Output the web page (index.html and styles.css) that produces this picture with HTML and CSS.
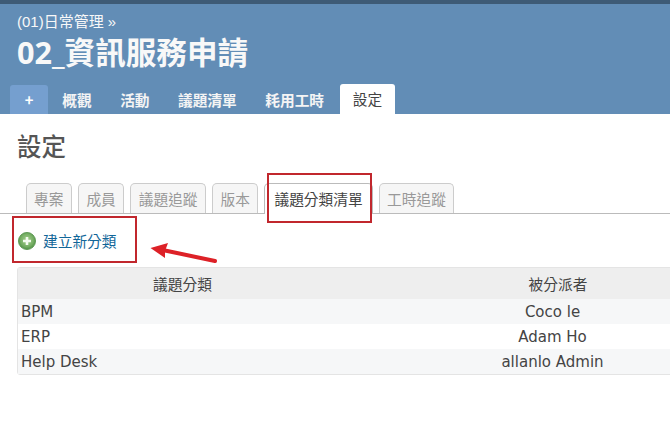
FILE: index.html
```html
<!DOCTYPE html>
<html lang="zh-Hant">
<head>
<meta charset="utf-8">
<title>設定</title>
<link rel="stylesheet" href="styles.css">
</head>
<body>
<header class="header">
  <div class="crumb">(01)日常管理 »</div>
  <h1 class="title">02_資訊服務申請</h1>
  <nav class="main-menu">
    <a class="new-item">+</a>
    <a class="menu-item">概觀</a>
    <a class="menu-item">活動</a>
    <a class="menu-item">議題清單</a>
    <a class="menu-item">耗用工時</a>
    <a class="menu-item selected">設定</a>
  </nav>
</header>
<main class="content">
  <h2 class="page-title">設定</h2>
  <div class="tabs">
    <a class="tab">專案</a>
    <a class="tab">成員</a>
    <a class="tab">議題追蹤</a>
    <a class="tab">版本</a>
    <a class="tab active">議題分類清單</a>
    <a class="tab">工時追蹤</a>
  </div>
  <div class="action">
    <svg class="plus-icon" width="18" height="18" viewBox="0 0 18 18" aria-hidden="true">
      <defs>
        <radialGradient id="g" cx="50%" cy="45%" r="55%">
          <stop offset="0" stop-color="#a9d294"/>
          <stop offset="0.7" stop-color="#74ad62"/>
          <stop offset="1" stop-color="#4f8f45"/>
        </radialGradient>
      </defs>
      <circle cx="9" cy="9" r="8.500" fill="url(#g)" stroke="#5f9a55" stroke-width="1"/>
      <path d="M9 5v8M5 9h8" stroke="#f4fbef" stroke-width="2.600"/>
    </svg>
    <a class="action-link">建立新分類</a>
  </div>
  <div class="table">
    <div class="row head"><div>議題分類</div><div class="head-assignee">被分派者</div></div>
    <div class="row odd"><div class="name">BPM</div><div>Coco le</div></div>
    <div class="row"><div class="name">ERP</div><div>Adam Ho</div></div>
    <div class="row odd"><div class="name">Help Desk</div><div>allanlo Admin</div></div>
  </div>
</main>
<div class="mark mark-tab"></div>
<div class="mark mark-action"></div>
<svg class="arrow" width="72" height="26" viewBox="0 0 72 26" aria-hidden="true">
  <path d="M65 20L15 9.500" stroke="#dd2127" stroke-width="4" stroke-linecap="round" fill="none"/>
  <path d="M0.500 7L18 2L15 10L15 17Z" fill="#dd2127"/>
</svg>
</body>
</html>
```
FILE: styles.css
```css
html, body {
  margin: 0;
  padding: 0;
  height: 421px;
  overflow: hidden;
  background: #fff;
}
body {
  position: relative;
  width: 670px;
  font-family: "DejaVu Sans", "Noto Sans CJK TC", sans-serif;
  font-size: 15px;
  color: #444;
}
.header {
  box-sizing: border-box;
  height: 114px;
  background: #628db6;
  border-top: 4px solid #3e5b76;
  padding: 10px 0 0 17px;
  color: #f8f8f8;
  display: flex;
  flex-direction: column;
}
.crumb {
  font-family: "Liberation Sans", "Noto Sans CJK TC", sans-serif;
  font-size: 15px;
  line-height: 15px;
}
.title {
  margin: 7px 0 0;
  font-family: "Noto Sans", "Noto Sans CJK TC", sans-serif;
  font-size: 30.600px;
  line-height: 32px;
  font-weight: 700;
  color: #f8f8f8;
}
.main-menu {
  display: flex;
  margin: auto 0 0 -7px;
  font-size: 14.700px;
  font-weight: 700;
  align-items: flex-end;
}
.main-menu a {
  display: block;
  font-family: "Noto Sans CJK TC", sans-serif;
}
.new-item {
  box-sizing: border-box;
  width: 38px;
  height: 29px;
  line-height: 29px;
  text-align: center;
  background: #759fcf;
  border-radius: 3px 3px 0 0;
  color: #fff;
}
.menu-item {
  height: 29px;
  line-height: 29px;
  padding: 0 14.250px;
  color: #f4f4f4;
}
.main-menu .selected {
  height: 30px;
  line-height: 30px;
  padding: 0 13px;
  margin-left: 1.400px;
  background: #fff;
  color: #444;
  font-weight: 400;
  border-radius: 3px 3px 0 0;
}
.content {
  padding: 0 0 0 17px;
}
.page-title {
  margin: 17px 0 0;
  font-family: "Noto Sans CJK TC", sans-serif;
  font-size: 24.500px;
  line-height: 30px;
  font-weight: 500;
  color: #555;
}
.tabs {
  display: flex;
  gap: 6px;
  margin: 22px 0 0 -17px;
  padding-left: 25.500px;
  height: 30px;
  border-bottom: 1px solid #bbb;
  box-sizing: content-box;
}
.tab {
  box-sizing: border-box;
  height: 30px;
  padding: 0 7.500px;
  line-height: 30px;
  font-family: "Noto Sans CJK TC", sans-serif;
  font-size: 14.700px;
  color: #999;
  background: #f6f6f6;
  border: 1px solid #ccc;
  border-bottom: 0;
  border-radius: 5px 5px 0 0;
}
.tab.active {
  height: 31px;
  padding: 0 9px;
  color: #444;
  background: #fff;
  border-color: #bbb;
}
.action {
  display: flex;
  align-items: center;
  gap: 7px;
  height: 53px;
  margin-left: 1px;
}
.action-link {
  font-family: "Noto Sans CJK TC", sans-serif;
  font-size: 14.700px;
  color: #169;
}
.table {
  width: 742px;
  border: 1px solid #e4e4e4;
  border-radius: 3px;
  box-sizing: border-box;
}
.row {
  display: grid;
  grid-template-columns: 329px 1fr;
  height: 25px;
  line-height: 27px;
  text-align: center;
}
.row.head {
  height: 31px;
  line-height: 31px;
  background: #eee;
  font-family: "Noto Sans CJK TC", sans-serif;
  font-size: 14.700px;
}
.head-assignee {
  padding-left: 11px;
}
.row.odd {
  background: #f6f7f8;
}
.name {
  text-align: left;
  padding-left: 3px;
}
.mark {
  position: absolute;
  box-sizing: border-box;
  border: 2px solid #c1272d;
}
.mark-tab {
  left: 267px;
  top: 173px;
  width: 105px;
  height: 50px;
}
.mark-action {
  left: 12px;
  top: 216px;
  width: 125px;
  height: 47px;
}
.arrow {
  position: absolute;
  left: 150px;
  top: 241px;
}
```
